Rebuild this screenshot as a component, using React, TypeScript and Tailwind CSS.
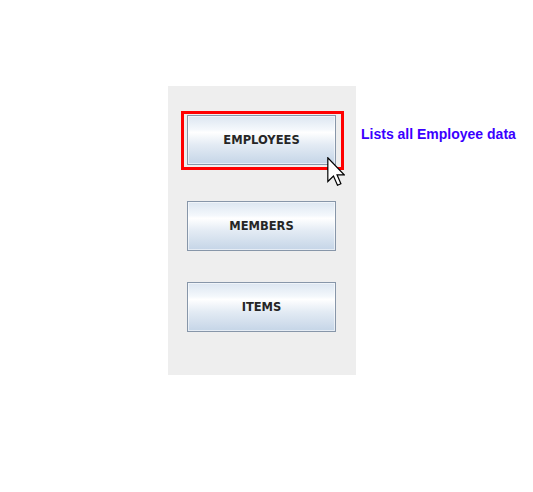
import React from 'react';

const btnFace =
  'bg-[linear-gradient(to_bottom,#dce6f1_0%,#f4f8fc_28%,#ffffff_34%,#e3ebf4_60%,#c5d5e7_100%)]';

const NavButton = ({ label, className = '' }: { label: string; className?: string }) => (
  <button
    className={`w-[149px] h-[50px] border border-[#8796a9] ${btnFace} shadow-[inset_0_0_0_1px_rgba(255,255,255,0.55)] flex items-center justify-center pt-[1px] font-['DejaVu_Sans',sans-serif] font-bold text-[11.5px] text-[#262626] ${className}`}
  >
    {label}
  </button>
);

const Cursor = () => (
  <svg width="18" height="29" viewBox="0 0 12 19.5" className="absolute left-[140px] top-[42px]">
    <path
      d="M0.5 0.5 L0.5 16.5 L4.3 12.8 L7 19 L9.3 18 L6.7 12 L11.5 12 Z"
      fill="#ffffff"
      stroke="#000000"
      strokeWidth="0.8"
      strokeLinejoin="miter"
    />
  </svg>
);

export default function App() {
  return (
    <div className="w-[533px] h-[492px] bg-white flex items-start pl-[168px] pt-[86px]">
      {/* Panel */}
      <div className="w-[188px] h-[289px] bg-[#eeeeee] flex flex-col pl-[19px] pt-[29px]">
        <div className="relative">
          <div className="absolute -left-[6px] -top-[4px] w-[163px] h-[59px] border-[3px] border-[#ff0000]" />
          <NavButton label="EMPLOYEES" className="relative" />
          <Cursor />
        </div>
        <NavButton label="MEMBERS" className="mt-[36px]" />
        <NavButton label="ITEMS" className="mt-[31px]" />
      </div>

      {/* Hint */}
      <p className="ml-[5px] mt-[40px] font-['Liberation_Sans',Arial,sans-serif] font-bold text-[14px] leading-[16px] text-[#3a00ff]">
        Lists all Employee data
      </p>
    </div>
  );
}
